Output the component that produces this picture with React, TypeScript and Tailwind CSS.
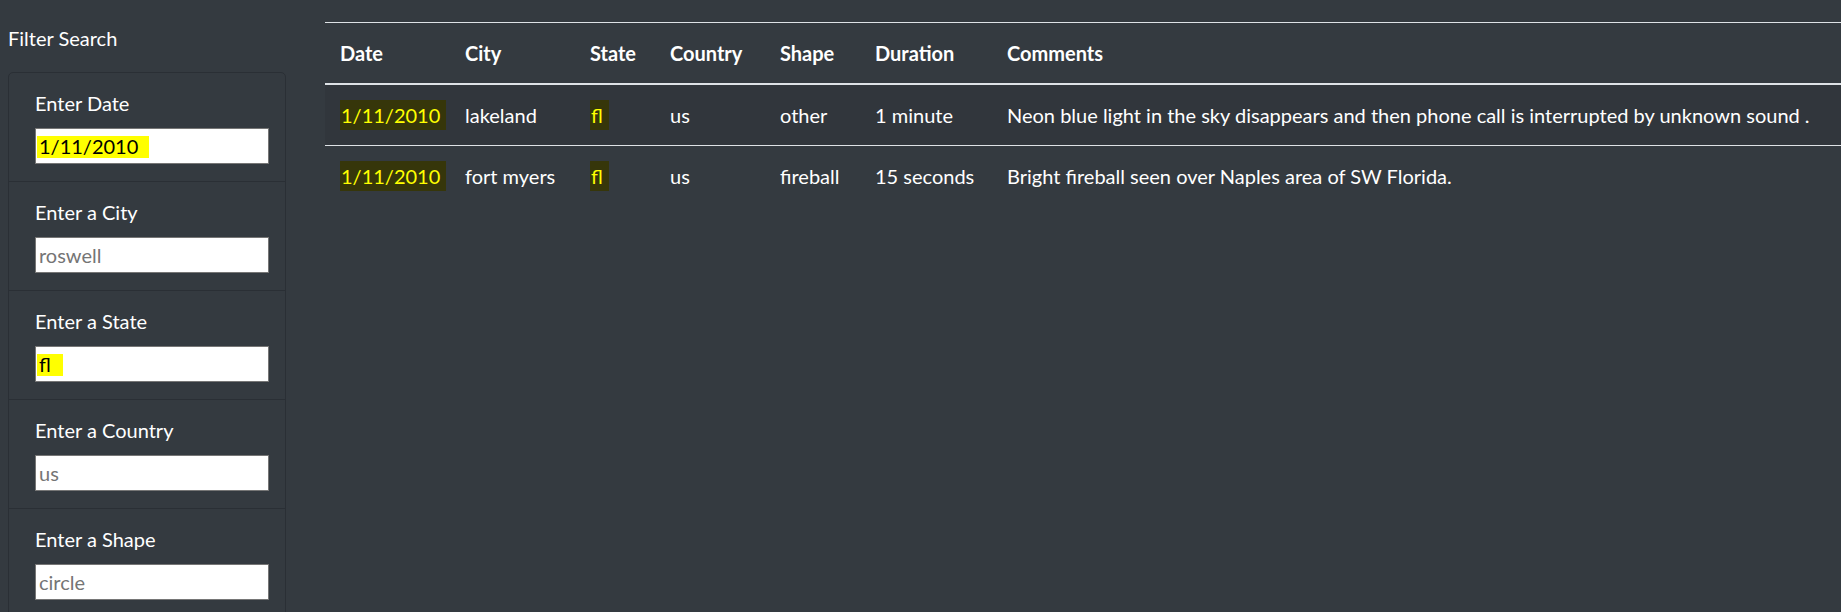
import type { ReactNode } from "react";

type Sighting = {
  date: string;
  city: string;
  state: string;
  country: string;
  shape: string;
  duration: string;
  comments: string;
};

const ROWS: Sighting[] = [
  {
    date: "1/11/2010",
    city: "lakeland",
    state: "fl",
    country: "us",
    shape: "other",
    duration: "1 minute",
    comments: "Neon blue light in the sky disappears and then phone call is interrupted by unknown sound .",
  },
  {
    date: "1/11/2010",
    city: "fort myers",
    state: "fl",
    country: "us",
    shape: "fireball",
    duration: "15 seconds",
    comments: "Bright fireball seen over Naples area of SW Florida.",
  },
];

const FILTERS = [
  { label: "Enter Date", placeholder: "1/11/2010", value: "1/11/2010", mark: "w-[112px]" },
  { label: "Enter a City", placeholder: "roswell", value: "", mark: "" },
  { label: "Enter a State", placeholder: "ca", value: "fl", mark: "w-[26px]" },
  { label: "Enter a Country", placeholder: "us", value: "", mark: "" },
  { label: "Enter a Shape", placeholder: "circle", value: "", mark: "" },
];

const COLUMNS = [
  { title: "Date", w: "w-[125px]" },
  { title: "City", w: "w-[125px]" },
  { title: "State", w: "w-[80px]" },
  { title: "Country", w: "w-[110px]" },
  { title: "Shape", w: "w-[95px]" },
  { title: "Duration", w: "w-[132px]" },
  { title: "Comments", w: "" },
];

// highlighter-extension style mark on matched text
const Mark = ({ children }: { children: ReactNode }) => (
  <span className="bg-[#36360a] py-[3px] pl-[1px] pr-[6px] text-[#ffff00]">{children}</span>
);

const FilterInput = ({ placeholder, value, mark }: { placeholder: string; value: string; mark: string }) => (
  <div className="relative h-[36px] w-[234px] border border-[#767676] bg-white">
    {value && <span className={`absolute left-[1px] top-[7px] h-[22px] bg-[#ffff00] ${mark}`} />}
    <input
      type="text"
      defaultValue={value}
      placeholder={placeholder}
      className="relative h-full w-full bg-transparent pl-[3px] text-[20px] text-black outline-none placeholder:text-[#757575]"
    />
  </div>
);

const cell = "whitespace-nowrap border-t border-[#dee2e6] p-[15px]";

export default function App() {
  return (
    <div className="flex h-[612px] w-full overflow-hidden bg-[#343a40] font-['Lato','Noto_Sans',sans-serif] text-[20px] leading-[30px] text-white">
      <aside className="w-[286px] shrink-0 pl-[8px]">
        <h5 className="mt-[23px] font-normal">Filter Search</h5>
        <ul className="mt-[19px] rounded-[5px] border border-[#2a2f35]">
          {FILTERS.map((f, i) => (
            <li
              key={f.label}
              className={`pl-[26px] pt-[15px] pb-[17px] ${i > 0 ? "border-t border-[#2a2f35]" : ""}`}
            >
              <label className="block">{f.label}</label>
              <div className="mt-[10px]">
                <FilterInput placeholder={f.placeholder} value={f.value} mark={f.mark} />
              </div>
            </li>
          ))}
        </ul>
      </aside>

      <main className="ml-[39px] flex-1">
        <table className="mt-[22px] w-full table-fixed border-collapse text-left">
          <thead>
            <tr>
              {COLUMNS.map((c) => (
                <th
                  key={c.title}
                  className={`whitespace-nowrap border-t border-b-2 border-[#dee2e6] px-[15px] py-[15px] font-bold ${c.w}`}
                >
                  {c.title}
                </th>
              ))}
            </tr>
          </thead>
          <tbody>
            {ROWS.map((r, i) => (
              <tr key={i} className={i % 2 === 0 ? "bg-[#31363c]" : ""}>
                <td className={cell}>
                  <Mark>{r.date}</Mark>
                </td>
                <td className={cell}>{r.city}</td>
                <td className={cell}>
                  <Mark>{r.state}</Mark>
                </td>
                <td className={cell}>{r.country}</td>
                <td className={cell}>{r.shape}</td>
                <td className={cell}>{r.duration}</td>
                <td className={cell}>{r.comments}</td>
              </tr>
            ))}
          </tbody>
        </table>
      </main>
    </div>
  );
}
